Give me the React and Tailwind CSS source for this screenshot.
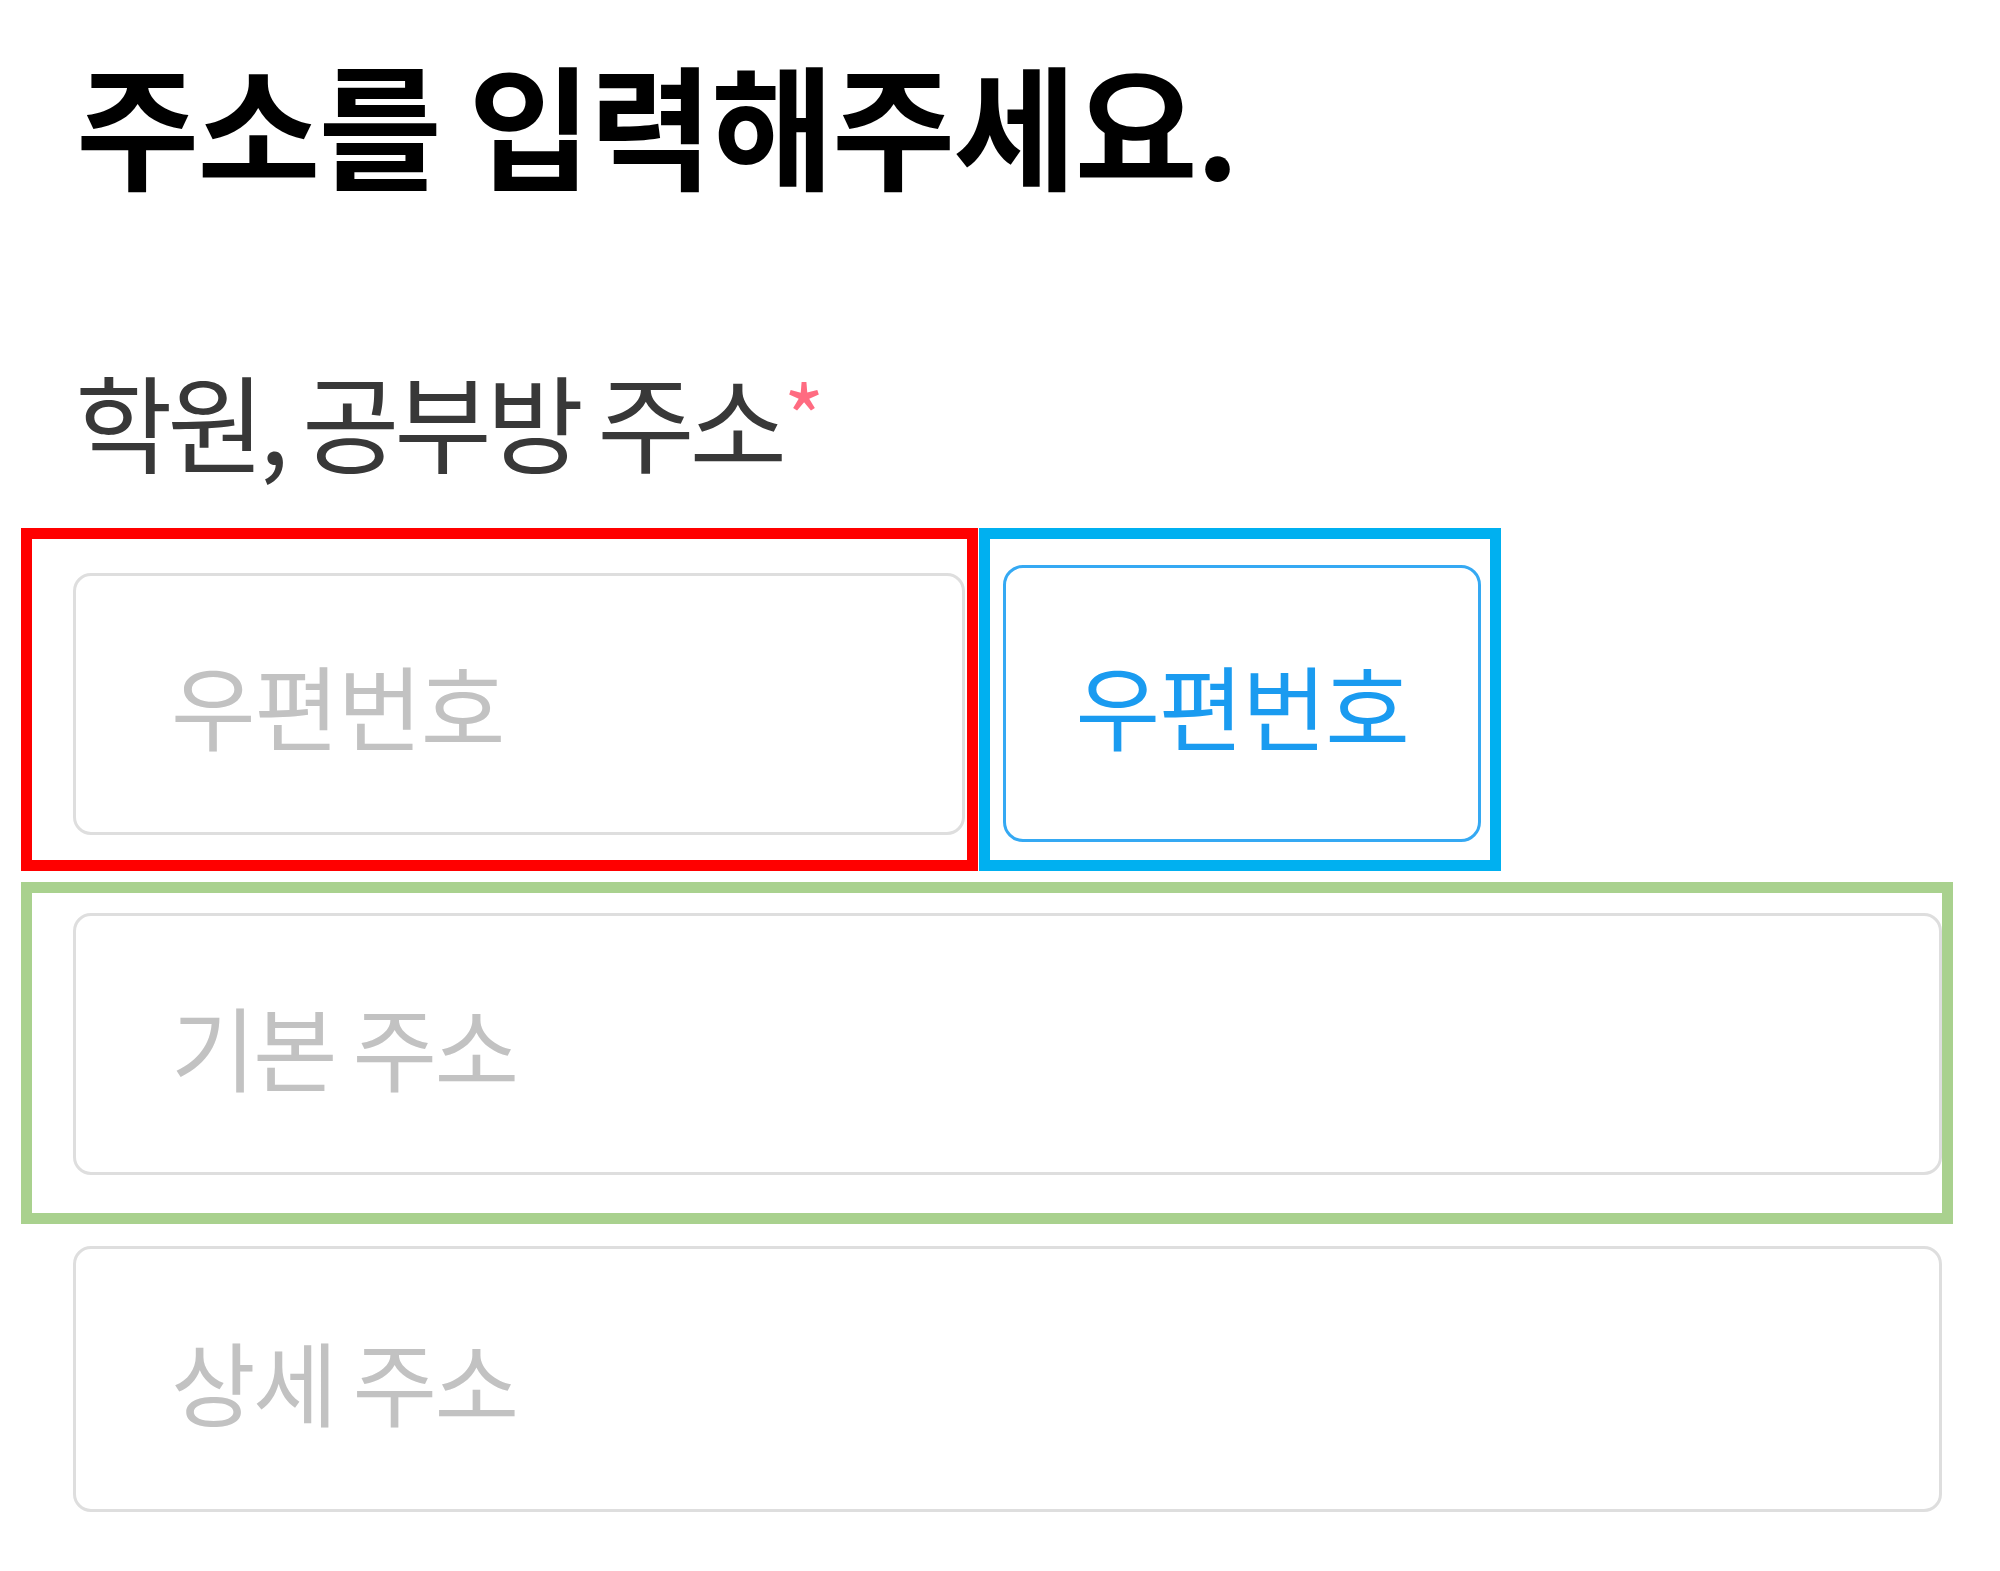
import React from "react";

export default function App() {
  return (
    <div className="relative w-[2000px] h-[1571px] bg-white overflow-hidden font-['Noto_Sans_CJK_KR','Noto_Sans',sans-serif]">
      <div className="flex flex-col pl-[73px] pt-[37px]">
        <h1 className="h-[170px] flex items-center pl-[3px] text-[134px] leading-none font-bold tracking-[-0.015em] text-black">
          주소를 입력해주세요.
        </h1>
        <div className="mt-[157px] h-[110px] flex items-center pl-[2px] text-[106px] leading-none font-normal tracking-[-0.05em] text-[#383838]">
          학원, 공부방 주소
          <span className="text-[#ff6b81] text-[88px] self-start mt-[6px] ml-[2px]">*</span>
        </div>
        <div className="mt-[91px] flex items-center gap-[38px]">
          <input
            readOnly
            placeholder="우편번호"
            className="w-[892px] h-[262px] border-[3px] border-[#dedede] rounded-[18px] pl-[95px] text-[92px] font-normal tracking-[-0.015em] outline-none placeholder:text-[#c2c2c2]"
          />
          <button className="w-[478px] h-[277px] border-[3px] border-[#35a9f3] rounded-[20px] text-[92px] font-normal tracking-[-0.015em] text-[#1a9bf0] flex items-center justify-center">
            우편번호
          </button>
        </div>
        <input
          readOnly
          placeholder="기본 주소"
          className="mt-[71px] w-[1869px] h-[262px] border-[3px] border-[#dedede] rounded-[18px] pl-[95px] text-[92px] font-normal tracking-[-0.03em] outline-none placeholder:text-[#c2c2c2]"
        />
        <input
          readOnly
          placeholder="상세 주소"
          className="mt-[71px] w-[1869px] h-[266px] border-[3px] border-[#dedede] rounded-[18px] pl-[95px] text-[92px] font-normal tracking-[-0.03em] outline-none placeholder:text-[#c2c2c2]"
        />
      </div>

      <div className="absolute left-[21px] top-[528px] w-[957px] h-[343px] border-[11px] border-[#ff0000] pointer-events-none" />
      <div className="absolute left-[979px] top-[528px] w-[522px] h-[343px] border-[11px] border-[#00b0f0] pointer-events-none" />
      <div className="absolute left-[21px] top-[882px] w-[1932px] h-[342px] border-[11px] border-[#a9d18e] pointer-events-none" />
    </div>
  );
}
